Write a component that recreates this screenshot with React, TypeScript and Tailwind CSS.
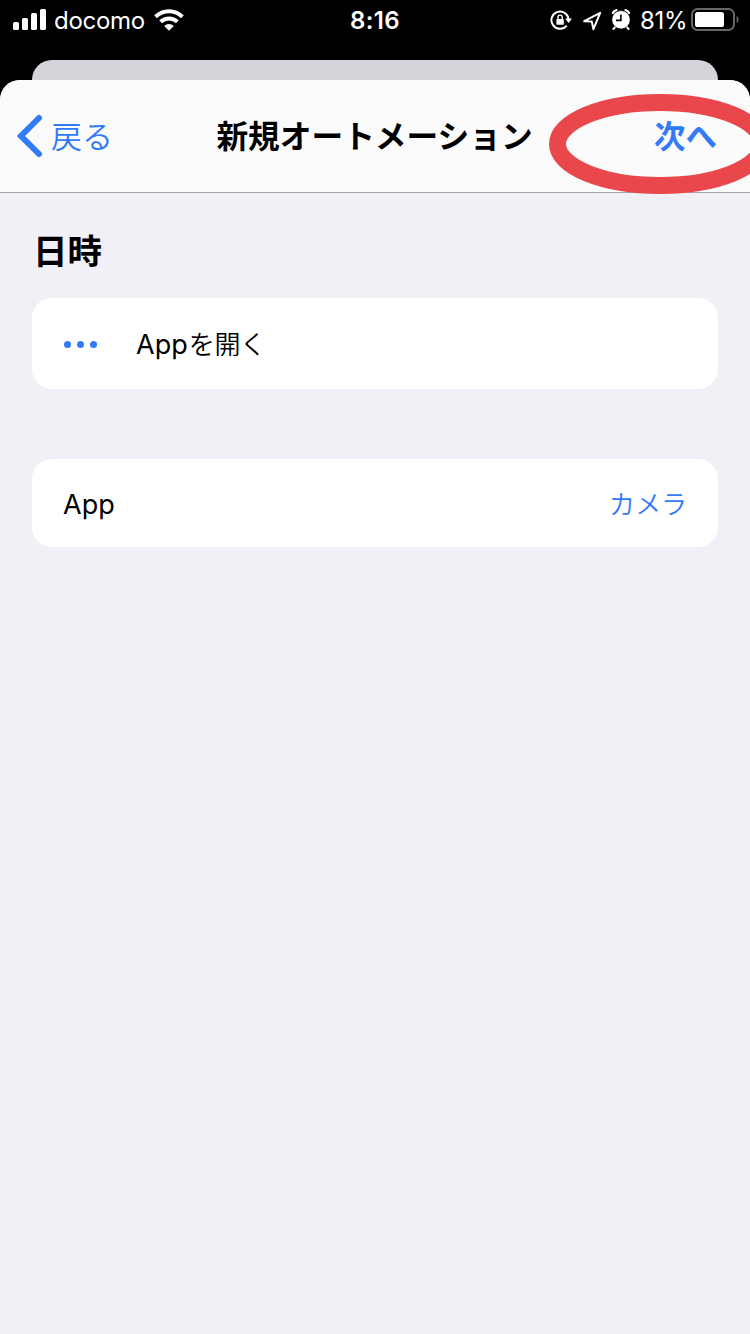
function SignalBars() {
  return (
    <svg className="block h-[22px] w-[34px] shrink-0" viewBox="0 0 34 22" fill="#fff">
      <rect x="0" y="13" width="6" height="8" rx="1.6" />
      <rect x="9" y="9" width="6" height="12" rx="1.6" />
      <rect x="18" y="4" width="6" height="17" rx="1.6" />
      <rect x="27" y="0" width="6" height="21" rx="1.6" />
    </svg>
  );
}

function Wifi() {
  return (
    <svg className="block h-[22px] w-[30px] shrink-0" viewBox="0 0 30 22">
      <g fill="none" stroke="#fff" strokeWidth="4">
        <path d="M1.6 7.8 A19.2 19.2 0 0 1 28.4 7.8" />
        <path d="M6.6 12.8 A12.2 12.2 0 0 1 23.4 12.8" />
      </g>
      <path d="M10.2 16.9 A7 7 0 0 1 19.8 16.9 L15 21.8 Z" fill="#fff" />
    </svg>
  );
}

function RotationLock() {
  return (
    <svg className="mt-[2px] block h-[22px] w-[22px] shrink-0" viewBox="0 0 22 22">
      <path d="M16.7 15.6 A8.6 8.6 0 1 1 18.6 9.4" fill="none" stroke="#fff" strokeWidth="1.9" />
      <path d="M15.2 8.4 H22 L18.6 13 Z" fill="#fff" />
      <rect x="6.4" y="9" width="7.4" height="5.8" rx="0.8" fill="#fff" />
      <path d="M8 9.4 V7.2 A2.1 2.1 0 0 1 12.2 7.2 V9.4" fill="none" stroke="#fff" strokeWidth="1.4" />
    </svg>
  );
}

function LocationArrow() {
  return (
    <svg className="mt-[2px] block h-5 w-5 shrink-0" viewBox="0 0 20 20">
      <path d="M18.2 1.8 L2.2 10.2 L9.8 10.6 L11.4 18.2 Z" fill="none" stroke="#fff" strokeWidth="2" strokeLinejoin="round" />
    </svg>
  );
}

function AlarmClock() {
  return (
    <svg className="mt-px block h-[22px] w-5 shrink-0" viewBox="0 0 20 22">
      <path d="M4.6 17.6 L2.4 20 M15.4 17.6 L17.6 20" stroke="#fff" strokeWidth="2" strokeLinecap="round" />
      <path d="M2 4 Q3 1.8 5.4 1.2 M18 4 Q17 1.8 14.6 1.2" fill="none" stroke="#fff" strokeWidth="2.4" strokeLinecap="round" />
      <circle cx="10" cy="10.8" r="9.2" fill="#fff" stroke="#000" strokeWidth="0.6" />
      <path d="M9.9 5.6 V11.4 H5" fill="none" stroke="#000" strokeWidth="1.6" />
    </svg>
  );
}

function Battery() {
  return (
    <svg className="block h-[23px] w-[48px] shrink-0" viewBox="0 0 48 23">
      <rect x="1" y="1" width="42" height="21" rx="5.5" fill="none" stroke="#666" strokeWidth="2" />
      <rect x="4" y="4" width="29" height="15" rx="2.6" fill="#fff" />
      <path d="M45.6 7.8 Q47.6 9 47.6 11.5 Q47.6 14 45.6 15.2 Z" fill="#666" />
    </svg>
  );
}

function StatusBar() {
  return (
    <div className="flex h-[60px] items-start justify-between font-['Inter','Noto_Sans_CJK_JP',sans-serif] text-white">
      <div className="flex h-10 w-[300px] items-center pl-[13px]">
        <SignalBars />
        <span className="ml-[7px] w-[100px] pt-[2px] text-[24px] leading-10 tracking-[-0.3px]">docomo</span>
        <Wifi />
      </div>
      <span className="pt-px text-[24px] font-semibold leading-10 tracking-[0.4px]">8:16</span>
      <div className="flex h-[39px] w-[300px] items-center justify-end pr-[11px]">
        <RotationLock />
        <span className="w-[10px]" />
        <LocationArrow />
        <span className="w-[9px]" />
        <AlarmClock />
        <span className="ml-[9px] w-[51px] whitespace-nowrap pt-[3px] text-[24px] leading-10 tracking-[-0.3px]">81%</span>
        <Battery />
      </div>
    </div>
  );
}

export default function App() {
  return (
    <div className="relative flex h-[1334px] w-[750px] flex-col overflow-hidden bg-black font-['Inter','Noto_Sans_CJK_JP',sans-serif] text-black">
      <StatusBar />
      <div className="mx-8 h-5 shrink-0 rounded-t-[20px] bg-[#d5d4da]" />
      <main className="flex flex-1 flex-col overflow-hidden rounded-t-[20px] bg-[#f1f0f6]">
        <header className="grid h-[113px] shrink-0 grid-cols-[1fr_auto_1fr] items-center border-b border-[#a5a5a9] bg-[#fbfbfc]">
          <button className="flex items-center pl-[17px] text-[#327af6]">
            <svg className="block h-[44px] w-[27px]" viewBox="0 0 27 44">
              <path d="M22 4 L4 22 L22 40" fill="none" stroke="currentColor" strokeWidth="6" strokeLinecap="round" strokeLinejoin="miter" />
            </svg>
            <span className="ml-[7px] pt-px text-[31px] font-[350] leading-10">戻る</span>
          </button>
          <h1 className="-ml-px pt-[2px] text-[31.7px] font-bold leading-10">新規オートメーション</h1>
          <button className="pr-[33px] pt-px text-right text-[31.5px] font-bold leading-10 text-[#327af6]">次へ</button>
        </header>
        <section className="flex flex-col px-8 pt-[34px]">
          <h2 className="pl-px text-[34.5px] font-bold leading-[50px]">日時</h2>
          <div className="mt-[21px] flex h-[91px] items-center rounded-[20px] bg-white pl-8">
            <span className="flex w-[72px] gap-[6px] pt-[2px]">
              <i className="size-[7px] rounded-full bg-[#327af6]" />
              <i className="size-[7px] rounded-full bg-[#327af6]" />
              <i className="size-[7px] rounded-full bg-[#327af6]" />
            </span>
            <span className="pt-[2px] text-[26px] font-[350] leading-10 tracking-[-0.3px]"><span className="mr-px text-[27px] font-normal tracking-normal">App</span>を開く</span>
          </div>
          <div className="mt-[70px] flex h-[88px] items-center justify-between rounded-[20px] bg-white px-[31px]">
            <span className="pt-[3px] text-[27px] leading-10">App</span>
            <span className="pt-[3px] text-[26px] font-[350] leading-10 text-[#327af6]">カメラ</span>
          </div>
        </section>
      </main>
      <svg className="pointer-events-none absolute left-[549px] top-[94px] h-[100px] w-[222px]" viewBox="0 0 222 100">
        <ellipse cx="111" cy="50" rx="102.5" ry="41.5" fill="none" stroke="#e9474c" strokeWidth="17" />
      </svg>
    </div>
  );
}
